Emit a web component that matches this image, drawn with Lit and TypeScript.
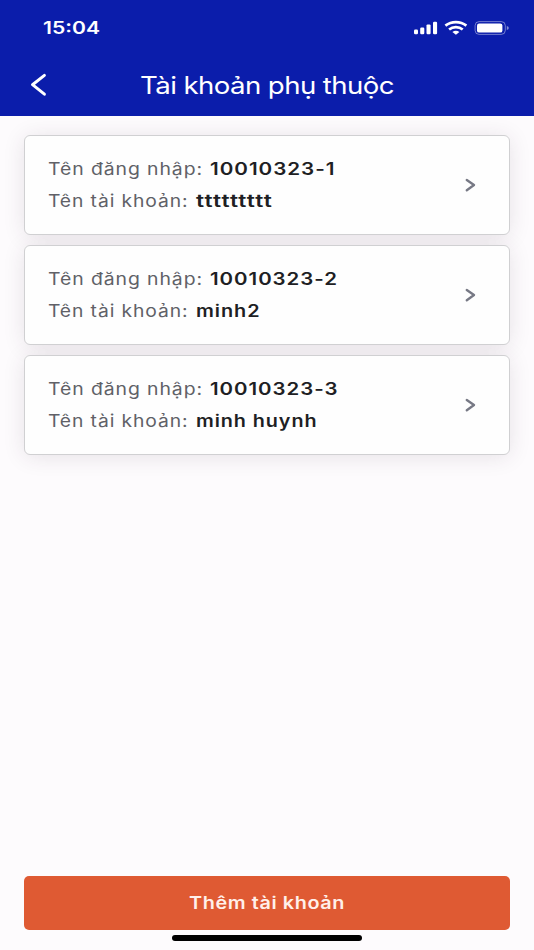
import { LitElement, html, css, svg } from "lit";
import { customElement, property } from "lit/decorators.js";

interface Account {
  login: string;
  name: string;
  loginWidth: number;
  nameWidth: number;
}

/** One line of extended-width text, fitted to a given width. */
@customElement("wide-text")
export class WideText extends LitElement {
  static styles = css`
    :host {
      display: block;
      flex: none;
    }
    svg {
      display: block;
      overflow: visible;
      fill: currentColor;
    }
  `;
  @property() text = "";
  @property({ type: Number }) width = 100;
  @property({ type: Number }) height = 32;

  render() {
    return html`<svg width=${this.width} height=${this.height}>
      ${svg`<text x="0" y=${this.height / 2 + 6} textLength=${this.width} lengthAdjust="spacingAndGlyphs">${this.text}</text>`}
    </svg>`;
  }
}

@customElement("account-card")
export class AccountCard extends LitElement {
  static styles = css`
    :host {
      position: relative;
      display: flex;
      align-items: center;
      justify-content: space-between;
      box-sizing: border-box;
      height: 100px;
      padding: 0 33px 0 23px;
      background: #fefefe;
      border: 1px solid #d0d0d2;
      border-radius: 6px;
    }
    :host::before {
      content: "";
      position: absolute;
      inset: 0;
      z-index: -1;
      border-radius: 6px;
      box-shadow: 0 2px 22px rgba(60, 40, 60, 0.13);
    }
    .row {
      display: flex;
      gap: 7px;
    }
    .label {
      color: #606167;
      letter-spacing: 0.8px;
    }
    .value {
      color: #1e1f24;
      font-weight: 600;
      letter-spacing: 0.8px;
    }
    .chevron {
      display: block;
      fill: none;
      stroke: #777985;
      stroke-width: 2.4;
      stroke-linecap: round;
      stroke-linejoin: round;
    }
  `;
  @property({ attribute: false }) account!: Account;

  render() {
    const a = this.account;
    return html`
      <div>
        <div class="row">
          <wide-text class="label" text="Tên đăng nhập:" width="155"></wide-text>
          <wide-text class="value" .text=${a.login} .width=${a.loginWidth}></wide-text>
        </div>
        <div class="row">
          <wide-text class="label" text="Tên tài khoản:" width="140.5"></wide-text>
          <wide-text class="value" .text=${a.name} .width=${a.nameWidth}></wide-text>
        </div>
      </div>
      <svg class="chevron" width="11" height="14" viewBox="0 0 11 14">
        <path d="M1.8 2 9 7.1 1.8 12.2" />
      </svg>
    `;
  }
}

@customElement("app-root")
export class AppRoot extends LitElement {
  static styles = css`
    :host {
      display: flex;
      flex-direction: column;
      box-sizing: border-box;
      height: 950px;
      overflow: hidden;
      background: #fdfbfd;
      font-family: Inter, "Liberation Sans", sans-serif;
      font-size: 17px;
    }
    header {
      flex: none;
      height: 115.5px;
      background: #0b1dab;
      color: #fff;
    }
    .status {
      display: flex;
      align-items: center;
      justify-content: space-between;
      height: 56px;
      padding: 0 25px 0 42.5px;
    }
    .time {
      font-weight: 600;
    }
    .nav {
      display: grid;
      grid-template-columns: 110px 1fr 110px;
      align-items: center;
      justify-items: center;
      height: 58px;
    }
    .back {
      justify-self: start;
      margin-left: 30px;
    }
    .title {
      font-size: 24px;
      letter-spacing: -0.5px;
      padding-top: 5px;
      margin-right: 1px;
    }
    main {
      flex: 1;
      display: flex;
      flex-direction: column;
      padding: 19.9px 24px 0;
    }
    .list {
      display: flex;
      flex-direction: column;
      gap: 9.9px;
      isolation: isolate;
    }
    footer {
      flex: none;
      display: flex;
      flex-direction: column;
      align-items: center;
      padding: 0 24px 9px;
    }
    button {
      display: flex;
      align-items: center;
      justify-content: center;
      width: 100%;
      height: 54px;
      padding: 0;
      border: 0;
      border-radius: 5px;
      background: #df5a33;
      color: #fff0ea;
      font: inherit;
      font-weight: 600;
      letter-spacing: 0.5px;
    }
    .home {
      width: 190px;
      height: 6px;
      margin-top: 5px;
      border-radius: 3px;
      background: #000;
    }
  `;

  private accounts: Account[] = [
    { login: "10010323-1", name: "ttttttttt", loginWidth: 125.5, nameWidth: 77 },
    { login: "10010323-2", name: "minh2", loginWidth: 128, nameWidth: 64.5 },
    { login: "10010323-3", name: "minh huynh", loginWidth: 128.5, nameWidth: 121.5 },
  ];

  render() {
    return html`
      <header>
        <div class="status">
          <wide-text class="time" text="15:04" width="57"></wide-text>
          <svg width="96" height="16" viewBox="0 0 96 16" fill="#fff">
            <rect x="1" y="9.6" width="4" height="4.7" rx="1.2" />
            <rect x="7.2" y="7.5" width="4.1" height="6.8" rx="1.2" />
            <rect x="13.5" y="4.4" width="4.1" height="9.9" rx="1.2" />
            <rect x="20" y="1.7" width="4.1" height="12.6" rx="1.2" />
            <g fill="none" stroke="#fff" stroke-width="2.7">
              <path d="M32.4 5.7C38.6 1 47.2 1 53.4 5.7" />
              <path d="M36.1 9.5C40 6.3 45.8 6.3 49.7 9.5" />
            </g>
            <path d="M39.4 12C41.5 10.4 44.3 10.4 46.4 12L42.9 14.8Z" />
            <rect x="62.1" y="1.6" width="30.2" height="12.8" rx="4" fill="none" stroke="#fff" stroke-opacity=".42" />
            <rect x="64" y="3.4" width="25.4" height="9.2" rx="2.2" />
            <path d="M93.8 6q2 .5 2 2t-2 2z" fill-opacity=".5" />
          </svg>
        </div>
        <div class="nav">
          <svg class="back" width="18" height="24" viewBox="0 0 18 24" fill="none" stroke="#fff" stroke-width="3" stroke-linecap="round" stroke-linejoin="round">
            <path d="M14.4 2.4 2.5 11.7 14.4 21.2" />
          </svg>
          <wide-text class="title" text="Tài khoản phụ thuộc" width="254" height="40"></wide-text>
        </div>
      </header>
      <main>
        <div class="list">
          ${this.accounts.map((a) => html`<account-card .account=${a}></account-card>`)}
        </div>
      </main>
      <footer>
        <button><wide-text text="Thêm tài khoản" width="156"></wide-text></button>
        <div class="home"></div>
      </footer>
    `;
  }
}
